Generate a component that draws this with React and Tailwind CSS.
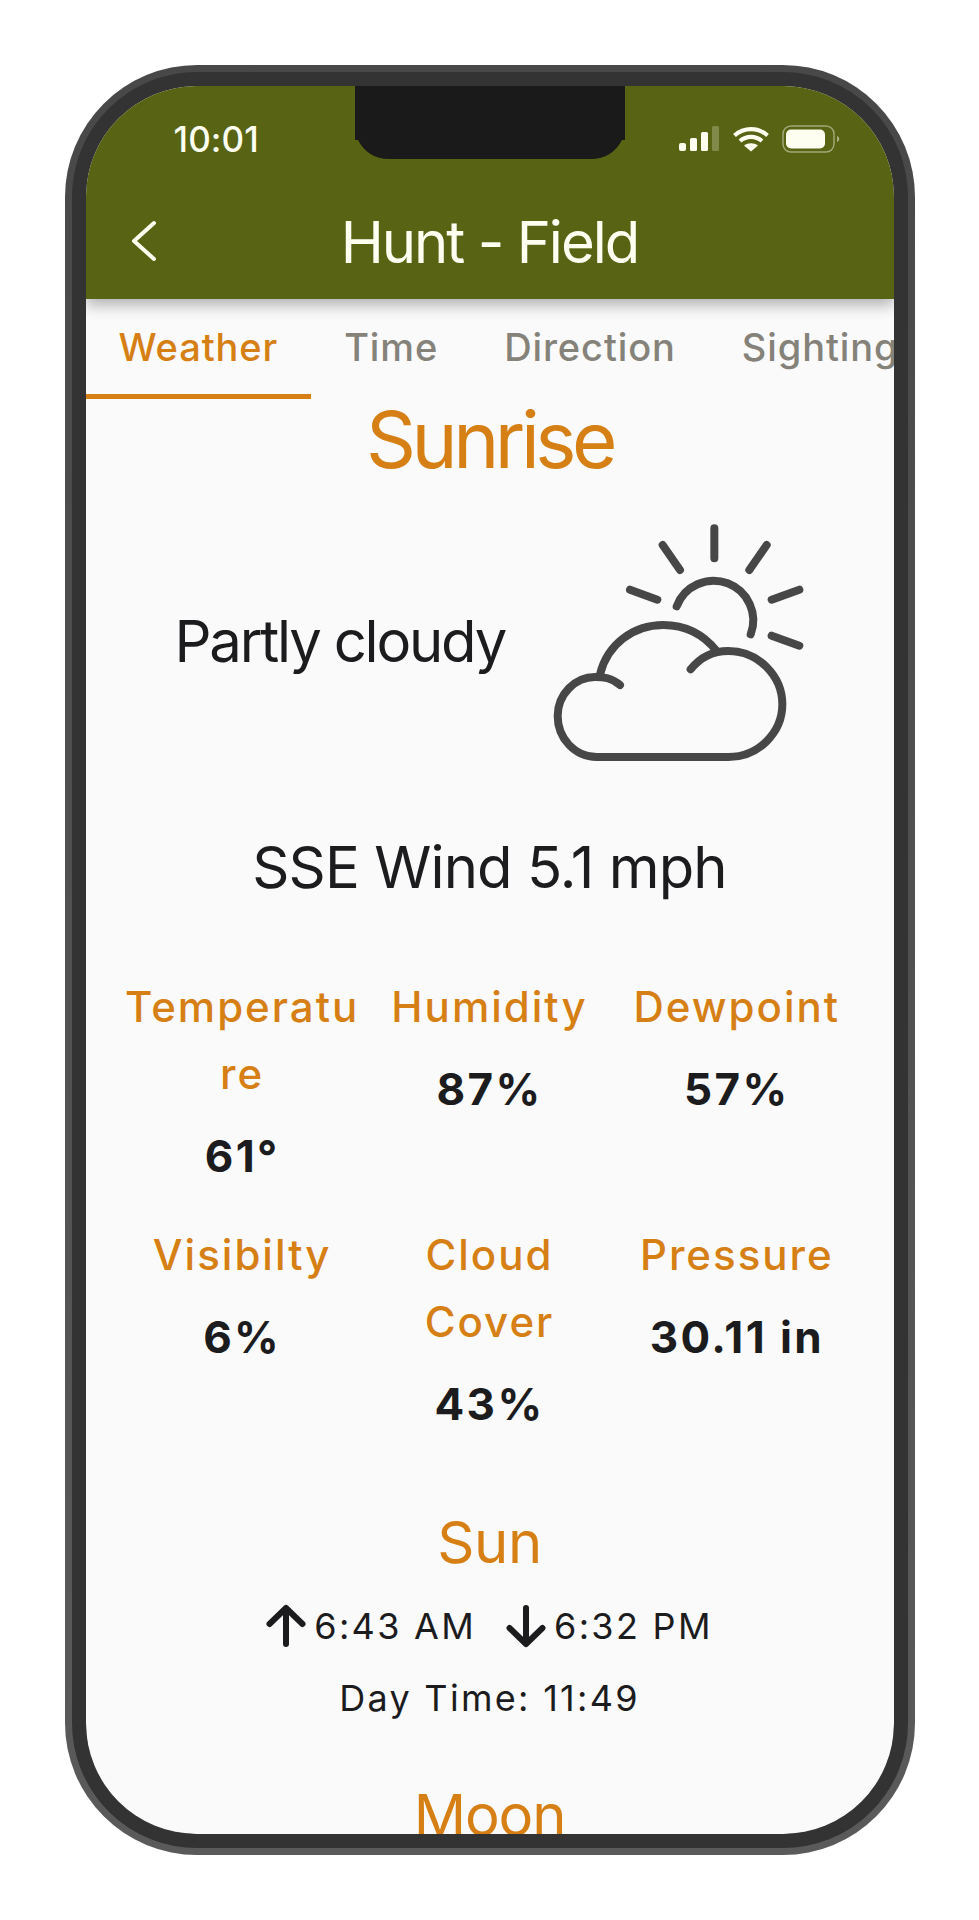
const font = { fontFamily: 'Inter, "Liberation Sans", sans-serif' };

function Stat({ label, value }) {
  return (
    <div className="flex flex-col items-center text-center">
      <div className="w-full break-all text-[42px] leading-[67px] font-medium tracking-[2px] text-[#d57f14]">{label}</div>
      <div className="mt-[16px] h-[67px] text-[44px] leading-[67px] font-bold tracking-[2.4px] text-[#1c1c1e]">{value}</div>
    </div>
  );
}

function Cloud() {
  return (
    <svg width="320" height="280" viewBox="0 0 960 840" fill="none" stroke="#474747" strokeWidth="24" strokeLinecap="round" strokeLinejoin="round">
      <path d="M583 82V172M428 132L480 207M740 132L688 207M330 266L412 296M838 266L755 296M755 404L838 434" />
      <path d="M470 316A115 115 0 0 1 692 400" />
      <path d="M300 552C275 530 250 528 225 528C165 528 113 580 113 645C113 712 165 768 230 768L625 768C715 768 787 695 787 610C787 525 715 450 625 450C580 450 540 470 512 505" />
      <path d="M240 520C262 430 340 372 430 372C495 372 550 400 590 450" />
    </svg>
  );
}

function Arrow({ down }) {
  return (
    <svg width="40" height="44" viewBox="0 0 40 44" fill="none" stroke="#1c1c1e" strokeWidth="6" strokeLinecap="round" strokeLinejoin="round" className={down ? 'rotate-180' : ''}>
      <path d="M20 5V40M3.500 20L20 4L36.500 20" />
    </svg>
  );
}

export default function App() {
  return (
    <div className="w-[979px] h-[1920px] bg-white flex justify-center items-start pt-[65px] overflow-hidden" style={font}>
      <div className="w-[850px] h-[1790px] rounded-[132px] p-[7px] bg-gradient-to-b from-[#484848] to-[#5a5a5a]">
        <div className="w-full h-full rounded-[125px] border-[14px] border-[#333333] bg-[#333333] overflow-hidden">
          <div className="relative w-full h-full rounded-[108px] overflow-hidden bg-[#fafafa] flex flex-col">
            <svg className="absolute left-[269px] top-0 z-20" width="270" height="73" viewBox="0 0 270 73" fill="#1a1a1a">
              <path d="M0 0H270V54H267C261 66 250 73 236 73H34C20 73 9 66 3 54H0Z" />
            </svg>
            <header className="relative z-10 h-[213px] shrink-0 bg-[#586314] shadow-[0_6px_14px_rgba(0,0,0,0.3)] text-[#fdfdf0]">
              <div className="flex items-center justify-between h-[98px] pl-[88px] pr-[52px] pt-[8px]">
                <span className="text-[35px] font-medium leading-none tracking-[0.1px]">10:01</span>
                <div className="flex items-center gap-[13px]">
                  <svg width="41" height="26" viewBox="0 0 41 26">
                    <rect x="0" y="17" width="7" height="8" rx="2" fill="#fdfdf0" />
                    <rect x="11" y="12" width="7" height="13" rx="1.500" fill="#fdfdf0" />
                    <rect x="22" y="6" width="7" height="19" rx="1.500" fill="#fdfdf0" />
                    <rect x="33" y="0" width="7" height="25" rx="1.500" fill="#fdfdf0" fillOpacity="0.25" />
                  </svg>
                  <svg width="36" height="26" viewBox="0 0 36 26" fill="none" stroke="#fdfdf0" strokeWidth="4.200">
                    <path d="M1.500 9.500C11 1 25 1 34.500 9.500" />
                    <path d="M7 15C13.500 9.500 22.500 9.500 29 15" />
                    <path d="M18 25.500L11 19.500C15 16.500 21 16.500 25 19.500Z" fill="#fdfdf0" stroke="none" />
                  </svg>
                  <svg width="60" height="28" viewBox="0 0 60 28" fill="none">
                    <rect x="1" y="1" width="51" height="26" rx="8" stroke="#fdfdf0" strokeOpacity="0.45" strokeWidth="1.500" />
                    <rect x="4" y="4.500" width="39" height="19" rx="5" fill="#fdfdf0" />
                    <path d="M55 11C58 12 58 16 55 17Z" fill="#fdfdf0" fillOpacity="0.5" />
                  </svg>
                </div>
              </div>
              <div className="relative flex items-center justify-center h-[82px] pt-[34px]">
                <svg className="absolute left-[44px] top-[36px]" width="28" height="42" viewBox="0 0 28 42" fill="none" stroke="#fdfdf0" strokeWidth="4" strokeLinecap="round" strokeLinejoin="round">
                  <path d="M24 3L4 21L24 39" />
                </svg>
                <h1 className="text-[58px] leading-none font-normal tracking-[-2px]">Hunt - Field</h1>
              </div>
            </header>

            <nav className="flex shrink-0 h-[100px] overflow-hidden">
              {['Weather', 'Time', 'Direction', 'Sighting'].map((t, i) => (
                <div key={t} className={`shrink-0 px-[33px] h-[100px] pt-[14px] text-[38px] leading-[68px] font-medium tracking-[0.9px] ${i === 0 ? 'text-[#d57f14] border-b-[5px] border-[#d57f14]' : 'text-[#85827a]'}`}>
                  {t}
                </div>
              ))}
            </nav>

            <main className="flex flex-col items-center text-[#1c1c1e] min-h-0">
              <h2 className="text-[78px] leading-[76px] mt-[3px] font-normal tracking-[-4.500px] text-[#d57f14]">Sunrise</h2>
              <div className="flex items-center w-full mt-[23px] h-[280px]">
                <div className="w-[403px] pl-[89px] text-[58px] font-normal leading-none tracking-[-2.200px] whitespace-nowrap">Partly cloudy</div>
                <div className="ml-[31px]"><Cloud /></div>
              </div>
              <div className="text-[58px] leading-none mt-[57px] tracking-[-0.900px] whitespace-nowrap">SSE Wind 5.1 mph</div>
              <div className="grid grid-cols-3 w-[742px] mt-[77px] gap-y-[31px] items-start">
                <Stat label="Temperature" value="61°" />
                <Stat label="Humidity" value="87%" />
                <Stat label="Dewpoint" value="57%" />
                <Stat label="Visibilty" value="6%" />
                <div className="flex flex-col items-center text-center">
                  <div className="w-[140px] text-[42px] leading-[67px] font-medium tracking-[2px] text-[#d57f14]">Cloud Cover</div>
                  <div className="mt-[16px] h-[67px] text-[44px] leading-[67px] font-bold tracking-[2.400px]">43%</div>
                </div>
                <Stat label="Pressure" value="30.11 in" />
              </div>
              <h3 className="text-[58px] leading-none mt-[75px] tracking-[-0.400px] text-[#d57f14]">Sun</h3>
              <div className="flex items-center gap-[8px] mt-[30px] text-[36px] leading-[50px] tracking-[2.300px] whitespace-nowrap">
                <Arrow />
                <span>6:43 AM</span>
                <span className="w-[14px]" />
                <Arrow down />
                <span>6:32 PM</span>
              </div>
              <div className="mt-[22px] text-[36px] leading-[50px] tracking-[2.300px] whitespace-nowrap">Day Time: 11:49</div>
              <h3 className="text-[58px] leading-none mt-[63px] tracking-[-1.200px] text-[#d57f14]">Moon</h3>
            </main>
          </div>
        </div>
      </div>
    </div>
  );
}
